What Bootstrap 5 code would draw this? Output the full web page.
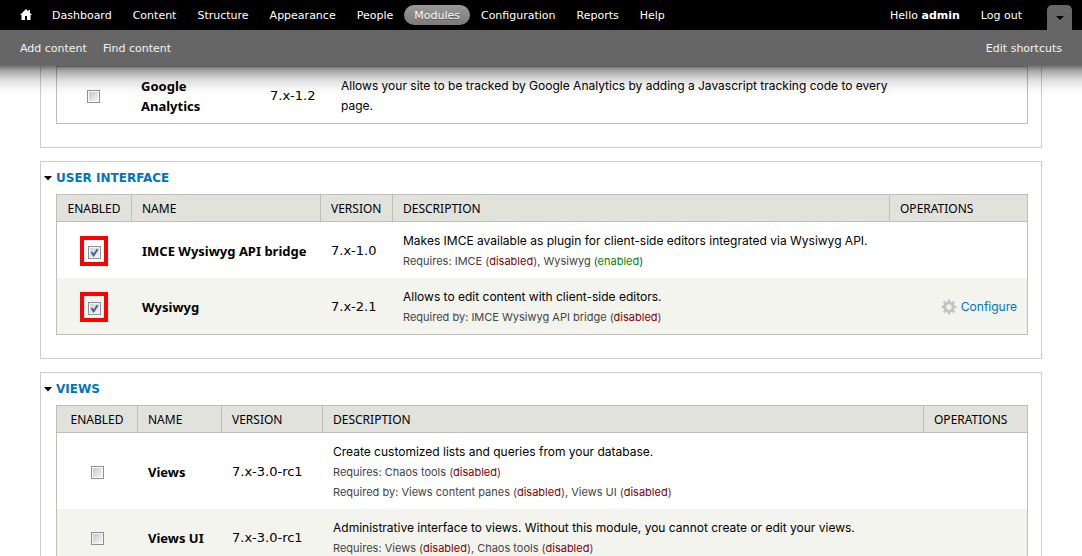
<!DOCTYPE html>
<html lang="en">
<head>
<meta charset="utf-8">
<meta name="viewport" content="width=device-width, initial-scale=1">
<title>Modules</title>
<link href="https://cdn.jsdelivr.net/npm/bootstrap@5.3.0/dist/css/bootstrap.min.css" rel="stylesheet">
<style>
  body { font: 12px/20px Inter, "Noto Sans", sans-serif; color: #000; background: #fff; }
  a { color: #0074bd; text-decoration: none; }

  /* Admin toolbar */
  .toolbar { font: 11px/20px "DejaVu Sans", sans-serif; }
  .toolbar a { color: #fff; }
  .toolbar-menu { background: #000; height: 30px; padding: 5px 10px 0; }
  .toolbar-menu .nav-link { padding: 0 10px; margin-right: 1px; border-radius: 10px; color: #fff; line-height: 22px; height: 20px; }
  .toolbar-menu .home-link { padding: 0 10px; }
  .toolbar-menu .nav-link.active { background: linear-gradient(#999, #7b7b7b); text-shadow: 0 1px 0 #555; }
  .drawer-toggle { width: 25px; height: 25px; margin-left: 14px; border: 0; padding: 0; border-radius: 5px 5px 0 0; background: #666; }
  .drawer { background: #666; height: 35px; padding: 9px 20px 6px; }
  .drawer a { color: #f4f4f4; }
  .toolbar-shade { height: 30px; margin-bottom: -30px; pointer-events: none;
    background: linear-gradient(rgba(0,0,0,.6), rgba(0,0,0,.34) 20%, rgba(0,0,0,.13) 50%, rgba(0,0,0,.03) 80%, rgba(0,0,0,0)); }

  /* Module groups */
  .page-body { padding: 66px 40px 20px; }
  .module-group { border: 1px solid #ccc; padding: 0 13px 23px 15px; margin-bottom: 13px; }
  .module-group.is-continued { border-top: 0; }
  .group-title { font: bold 12px/20px "DejaVu Sans", sans-serif; margin: 0 0 6px -12px; padding-top: 6px; text-transform: uppercase; }
  .group-title svg { width: 8px; height: 5px; margin-right: 4px; }

  .module-table { table-layout: fixed; border-collapse: separate; border-spacing: 0; border: 1px solid #bebfb9; margin: 0; --bs-table-color: #000; --bs-table-bg: transparent; }
  .module-table > :not(caption) > * > * { padding: 9px 10px 7px; border: 0; vertical-align: middle; }
  .module-table > thead > tr > th { font: 12px/20px "Noto Sans", sans-serif; padding: 4px 10px 2px; background: #e1e2dc; border-bottom: 1px solid #bebfb9; text-transform: uppercase; }
  .module-table > * > tr > * + * { border-left: 1px solid transparent; }
  .module-table > thead > tr > th + th { border-left-color: #bebfb9; }
  .module-table > tbody > tr:nth-child(even) { background: #f3f4ee; }
  .module-table > * > tr > .enabled-cell { text-align: center; padding-left: 2px; padding-right: 2px; }
  .module-name { display: block; font: bold 13px/20px "Noto Sans", sans-serif; }
  .module-version { font: 13px/20px "DejaVu Sans", sans-serif; white-space: nowrap; }
  .requirements { font-size: 11px; color: #444; }
  .is-off { color: #800000; }
  .is-on { color: #080; }

  .module-check { appearance: none; width: 13px; height: 13px; margin: 0; vertical-align: middle; border: 1px solid #8e8f8f; padding: 1px;
    background: linear-gradient(135deg, #c3c8d0, #f6f6f6) content-box; }
  .module-check:checked { padding: 0; box-shadow: inset 0 0 0 1px #f4f4f4;
    background: url("data:image/svg+xml,%3Csvg xmlns='http://www.w3.org/2000/svg' viewBox='0 0 11 11'%3E%3Cpath d='M2.4 5.2 4.6 8.2 8.6 2.2' fill='none' stroke='%234a5f97' stroke-width='2'/%3E%3C/svg%3E") center / 11px, linear-gradient(135deg, #cbcfd5, #f6f6f6); }
  .highlight { display: inline-flex; border: 4px solid #f00; padding: 6px 3px 3px 4px; vertical-align: middle; }
</style>
</head>
<body>

<header class="toolbar fixed-top">
  <nav class="toolbar-menu d-flex align-items-start" aria-label="Administration">
    <div class="nav flex-nowrap flex-grow-1 align-items-center">
      <a class="home-link d-flex" href="#" aria-label="Home">
        <svg width="12" height="20" viewBox="0 0 12 20" fill="#fff"><path d="M6 4 0 10h1.500v5H5v-4h2v4h3.500v-5H12L10 8V5H8.500v1.500z"/></svg>
      </a>
      <a class="nav-link" href="#">Dashboard</a>
      <a class="nav-link" href="#">Content</a>
      <a class="nav-link" href="#">Structure</a>
      <a class="nav-link" href="#">Appearance</a>
      <a class="nav-link" href="#">People</a>
      <a class="nav-link active" href="#" aria-current="page">Modules</a>
      <a class="nav-link" href="#">Configuration</a>
      <a class="nav-link" href="#">Reports</a>
      <a class="nav-link" href="#">Help</a>
    </div>
    <div class="nav flex-nowrap">
      <a class="nav-link" href="#">Hello <strong>admin</strong></a>
      <a class="nav-link" href="#">Log out</a>
    </div>
    <button class="drawer-toggle" type="button" aria-label="Hide shortcuts">
      <svg class="d-block mx-auto" width="8" height="4" viewBox="0 0 8 4"><path d="M0 0h8L4 4z"/></svg>
    </button>
  </nav>
  <div class="drawer d-flex gap-3">
    <a href="#">Add content</a>
    <a href="#">Find content</a>
    <a class="ms-auto" href="#">Edit shortcuts</a>
  </div>
  <div class="toolbar-shade"></div>
</header>

<main class="page-body">
  <section class="module-group is-continued">
    <table class="table module-table">
      <colgroup><col style="width:73px"><col style="width:129px"><col style="width:71px"><col><col style="width:95px"></colgroup>
      <tbody>
        <tr>
          <td class="enabled-cell"><input class="module-check" type="checkbox" id="m-ga" aria-label="Enable Google Analytics"></td>
          <td><label class="module-name" for="m-ga">Google Analytics</label></td>
          <td class="module-version">7.x-1.2</td>
          <td>Allows your site to be tracked by Google Analytics by adding a Javascript tracking code to every page.</td>
          <td></td>
        </tr>
      </tbody>
    </table>
  </section>

  <section class="module-group">
    <h2 class="group-title"><a class="d-flex align-items-center" href="#"><svg viewBox="0 0 8 5"><path d="M0 0h8L4 4.500z"/></svg>User interface</a></h2>
    <table class="table module-table">
      <colgroup><col style="width:74px"><col style="width:189px"><col style="width:72px"><col><col style="width:138px"></colgroup>
      <thead>
        <tr><th class="enabled-cell">Enabled</th><th>Name</th><th>Version</th><th>Description</th><th>Operations</th></tr>
      </thead>
      <tbody>
        <tr>
          <td class="enabled-cell"><span class="highlight"><input class="module-check" type="checkbox" id="m-imce" checked aria-label="Enable IMCE Wysiwyg API bridge"></span></td>
          <td><label class="module-name" for="m-imce">IMCE Wysiwyg API bridge</label></td>
          <td class="module-version">7.x-1.0</td>
          <td>Makes IMCE available as plugin for client-side editors integrated via Wysiwyg API.
            <div class="requirements">Requires: IMCE (<span class="is-off">disabled</span>), Wysiwyg (<span class="is-on">enabled</span>)</div></td>
          <td></td>
        </tr>
        <tr>
          <td class="enabled-cell"><span class="highlight"><input class="module-check" type="checkbox" id="m-wys" checked aria-label="Enable Wysiwyg"></span></td>
          <td><label class="module-name" for="m-wys">Wysiwyg</label></td>
          <td class="module-version">7.x-2.1</td>
          <td>Allows to edit content with client-side editors.
            <div class="requirements">Required by: IMCE Wysiwyg API bridge (<span class="is-off">disabled</span>)</div></td>
          <td><a class="d-flex justify-content-end align-items-center gap-1" href="#">
            <svg width="16" height="16" viewBox="0 0 16 16" fill="none" stroke="#c3c3c3"><circle cx="8" cy="8" r="4.200" stroke-width="3"/><path d="M8 .5v3M8 12.500v3M.5 8h3M12.500 8h3M2.700 2.700l2 2M11.300 11.300l2 2M13.300 2.700l-2 2M4.700 11.300l-2 2" stroke-width="2.600"/></svg>
            Configure</a></td>
        </tr>
      </tbody>
    </table>
  </section>

  <section class="module-group">
    <h2 class="group-title"><a class="d-flex align-items-center" href="#"><svg viewBox="0 0 8 5"><path d="M0 0h8L4 4.500z"/></svg>Views</a></h2>
    <table class="table module-table">
      <colgroup><col style="width:80px"><col style="width:84px"><col style="width:101px"><col><col style="width:104px"></colgroup>
      <thead>
        <tr><th class="enabled-cell">Enabled</th><th>Name</th><th>Version</th><th>Description</th><th>Operations</th></tr>
      </thead>
      <tbody>
        <tr>
          <td class="enabled-cell"><input class="module-check" type="checkbox" id="m-views" aria-label="Enable Views"></td>
          <td><label class="module-name" for="m-views">Views</label></td>
          <td class="module-version">7.x-3.0-rc1</td>
          <td>Create customized lists and queries from your database.
            <div class="requirements">Requires: Chaos tools (<span class="is-off">disabled</span>)</div>
            <div class="requirements">Required by: Views content panes (<span class="is-off">disabled</span>), Views UI (<span class="is-off">disabled</span>)</div></td>
          <td></td>
        </tr>
        <tr>
          <td class="enabled-cell"><input class="module-check" type="checkbox" id="m-vui" aria-label="Enable Views UI"></td>
          <td><label class="module-name" for="m-vui">Views UI</label></td>
          <td class="module-version">7.x-3.0-rc1</td>
          <td>Administrative interface to views. Without this module, you cannot create or edit your views.
            <div class="requirements">Requires: Views (<span class="is-off">disabled</span>), Chaos tools (<span class="is-off">disabled</span>)</div></td>
          <td></td>
        </tr>
      </tbody>
    </table>
  </section>
</main>

<script src="https://cdn.jsdelivr.net/npm/bootstrap@5.3.0/dist/js/bootstrap.bundle.min.js"></script>
</body>
</html>
